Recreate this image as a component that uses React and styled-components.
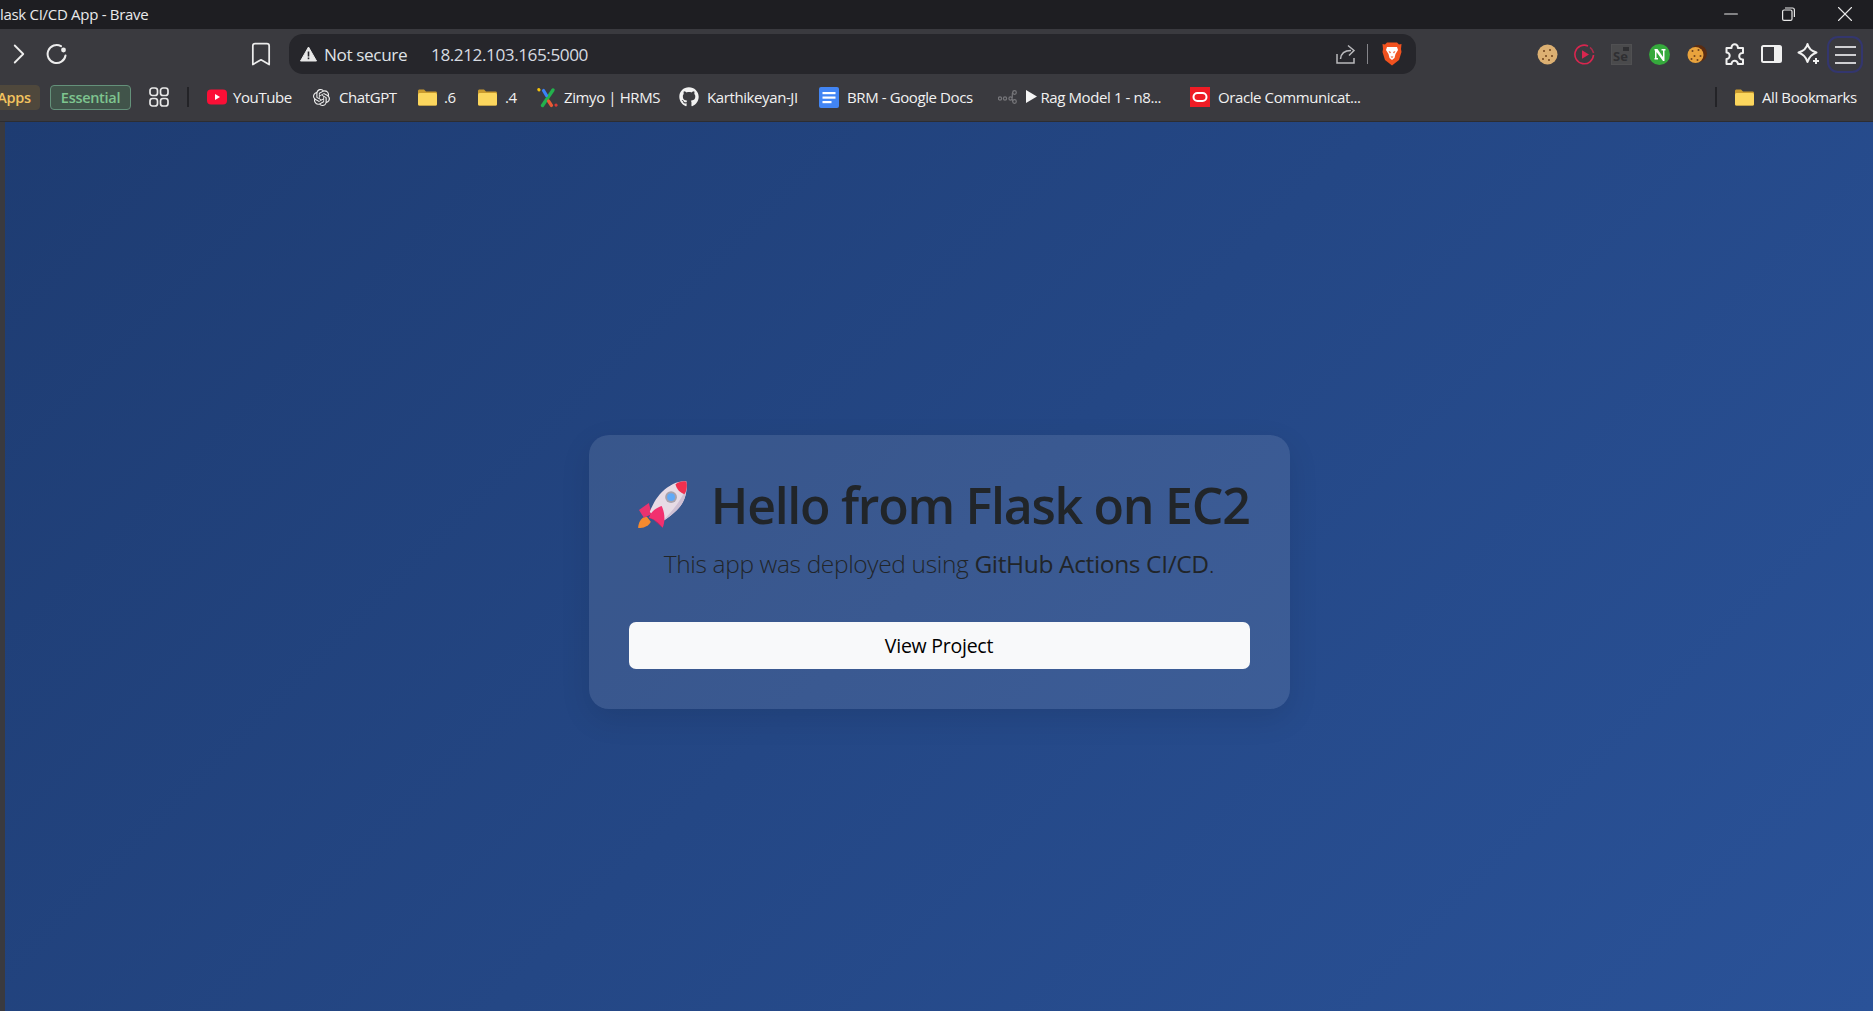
import React from "react";
import styled, { createGlobalStyle } from "styled-components";
import { FaGithub } from "react-icons/fa";
import { SiOpenai } from "react-icons/si";
import { ChevronRight, Bookmark as BookmarkIcon, Minus, X } from "lucide-react";

const Global = createGlobalStyle`
  html, body { margin: 0; padding: 0; height: 100%; overflow: hidden; background: #3a3a3f; }
  * { box-sizing: border-box; }
  #root { height: 100%; }
`;

const UI_FONT = `"Open Sans", "Noto Sans", "Liberation Sans", sans-serif`;

const Page = styled.div`
  display: flex;
  flex-direction: column;
  height: 100vh;
  font-family: ${UI_FONT};
`;

const TitleBar = styled.header`
  flex: 0 0 29px;
  display: flex;
  align-items: center;
  background: #1e1e22;
  color: #e9e9ea;
  font-size: 15px;
  letter-spacing: -0.3px;
  padding-bottom: 2px;
`;
const WindowTitle = styled.span`
  flex: 1;
  white-space: nowrap;
`;
const WindowButtons = styled.div`
  display: flex;
  align-items: center;
  gap: 43px;
  padding-right: 21px;
  color: #e8e8e8;
`;
const WindowButton = styled.span`
  display: flex;
  flex: 0 0 14px;
  min-width: 0;
  height: 14px;
  align-items: center;
  justify-content: center;
  & > svg { flex: none; }
`;

const Toolbar = styled.div`
  flex: 0 0 45px;
  display: flex;
  align-items: flex-start;
  padding-top: 5px;
  background: #3a3a3f;
`;
const NavButton = styled.span`
  display: flex;
  align-items: center;
  justify-content: center;
  height: 40px;
  min-width: 0;
  flex: 0 0 ${(p) => p.$w}px;
  margin-left: ${(p) => p.$ml || 0}px;
  color: #ececec;
  & > svg { flex: none; }
`;
const UrlBar = styled.div`
  flex: 0 0 1127px;
  height: 40px;
  margin-left: 20px;
  background: #26262b;
  border-radius: 14px;
  display: flex;
  align-items: center;
  padding: 0 14px 0 11px;
  color: #e6e6e6;
`;
const SecurityLabel = styled.span`
  font-size: 17.2px;
  letter-spacing: -0.4px;
  margin-left: 7px;
  width: 107px;
  white-space: nowrap;
  color: #dfe2e6;
`;
const UrlText = styled.span`
  font-size: 17.2px;
  letter-spacing: -0.45px;
  color: #d6dae0;
  flex: 1;
  white-space: nowrap;
`;
const UrlDivider = styled.span`
  width: 1px;
  height: 20px;
  background: #85858a;
  margin: 0 14px 0 11px;
`;
const ExtensionTray = styled.div`
  display: flex;
  align-items: center;
  height: 40px;
  margin-left: 121px;
`;
const ExtSlot = styled.span`
  display: flex;
  align-items: center;
  justify-content: center;
  flex: 0 0 ${(p) => p.$w || 21}px;
  min-width: 0;
  margin-right: ${(p) => p.$mr ?? 16}px;
  height: 24px;
  color: #f0f0f0;
  & > svg { flex: none; }
`;
const SeBadge = styled.span`
  position: relative;
  flex: none;
  width: 21px;
  height: 21px;
  background: #4a4a4c;
  border: 1px solid #505052;
  color: #2f2f32;
  font: 700 13px/1 ${UI_FONT};
  display: flex;
  align-items: flex-end;
  padding: 0 0 1px 1px;
  &::after {
    content: "";
    position: absolute;
    top: 2px;
    right: 2px;
    width: 6px;
    height: 4px;
    background: #2f2f32;
  }
`;
const MenuButton = styled.span`
  flex: 0 0 36px;
  height: 37px;
  margin-top: 1px;
  margin-left: -9px;
  border: 2px solid #33366e;
  border-radius: 11px;
  display: flex;
  flex-direction: column;
  align-items: center;
  justify-content: center;
  gap: 6px;
`;
const MenuLine = styled.span`
  width: 21px;
  height: 2px;
  background: #cfcfd2;
`;

const BookmarkBar = styled.nav`
  flex: 0 0 48px;
  display: flex;
  align-items: center;
  background: #3a3a3f;
  border-bottom: 1px solid #2d2d31;
  padding-bottom: 1px;
  color: #f1f1f1;
  font-size: 15px;
  letter-spacing: -0.4px;
  white-space: nowrap;
`;
const Chip = styled.span`
  flex: 0 0 ${(p) => p.$w}px;
  min-width: 0;
  margin-left: ${(p) => p.$ml}px;
  height: 25px;
  border-radius: 4px;
  display: flex;
  align-items: center;
  justify-content: center;
  font-weight: 600;
  font-size: 14.5px;
  letter-spacing: -0.3px;
  color: ${(p) => p.$fg};
  background: ${(p) => p.$bg};
  border: 1px solid ${(p) => p.$line};
`;
const BarDivider = styled.span`
  flex: 0 0 2px;
  height: 20px;
  margin-left: ${(p) => p.$ml}px;
  background: #232327;
`;
const Mark = styled.span`
  display: flex;
  align-items: center;
  flex: 0 0 ${(p) => p.$w}px;
  min-width: 0;
  margin-left: ${(p) => p.$ml}px;
  gap: ${(p) => p.$gap}px;
`;
const MarkIcon = styled.span`
  display: flex;
  align-items: center;
  justify-content: center;
  flex: 0 0 auto;
`;

const Main = styled.main`
  flex: 1;
  display: flex;
  align-items: center;
  justify-content: center;
  padding-top: 10px;
  border-left: 5px solid #3a3a3f;
  background: linear-gradient(135deg, #1e3c72, #2a5298);
`;
const Card = styled.section`
  width: 701px;
  height: 274px;
  padding: 40px;
  border-radius: 20px;
  background: rgba(255, 255, 255, 0.1);
  box-shadow: 0 10px 30px rgba(0, 0, 0, 0.1);
  color: #212529;
  text-align: center;
`;
const Heading = styled.h1`
  margin: 0 0 10px;
  display: flex;
  align-items: center;
  justify-content: center;
  gap: 23px;
  height: 60px;
  font-size: 50px;
  line-height: 66px;
  font-weight: 600;
  letter-spacing: -1.26px;
  white-space: nowrap;
  padding-left: 8px;
`;
const Lead = styled.p`
  margin: 0 0 40px;
  height: 37px;
  font-size: 24.5px;
  line-height: 38px;
  font-weight: 300;
  letter-spacing: -0.36px;
  white-space: nowrap;
`;
const Strong = styled.strong`
  font-weight: 400;
`;
const ProjectButton = styled.a`
  display: block;
  height: 47px;
  border-radius: 7px;
  background: #f8f9fa;
  color: #000;
  font-size: 19.5px;
  line-height: 48px;
  letter-spacing: -0.25px;
`;

const Rocket = () => (
  <svg width="52" height="49" viewBox="7 7 52 49">
    <path d="M17 44C13 44 9 47 8 55C14 56 19 53 21 49Z" fill="#f58a2e" />
    <path d="M19 30L9 37L14 45L22 41Z" fill="#e8336f" />
    <path d="M57 8C50 7 40 11 32 19C25 26 21 36 20 39L31 50C35 47 45 41 51 33C57 25 58 15 57 8Z" fill="#e7dbe5" />
    <path d="M31 50C35 47 45 41 51 33C55 28 57 21 57 14C53 25 43 39 31 50Z" fill="#cfc0d4" />
    <path d="M46 11C50 8 55 7.5 57 8.5C58 12 57.5 18 55 21C51 20 47 16 46 11Z" fill="#f0304f" />
    <circle cx="41.5" cy="24" r="6" fill="#a7a2ad" />
    <circle cx="41.5" cy="24" r="4" fill="#62aaf7" />
    <path d="M32 33C26 35 21 39 19 45L24 47L33 55C36 48 35 39 32 33Z" fill="#f2306f" />
    <path d="M19 45L24 47L33 55C29 50 24 46 19 45Z" fill="#b51f5c" />
  </svg>
);

const Reload = () => (
  <svg width="22" height="22" viewBox="0 0 22 22" fill="none" stroke="currentColor" strokeWidth="2">
    <path d="M19.5 12.5A9 9 0 1 1 15 3.2" strokeLinecap="round" />
    <circle cx="17.5" cy="7" r="2.4" fill="currentColor" stroke="none" />
  </svg>
);
const Warning = () => (
  <svg width="17" height="16" viewBox="0 0 17 16">
    <path d="M8.5 1L16.5 15H.5Z" fill="#e8e8e8" stroke="#e8e8e8" strokeLinejoin="round" />
    <rect x="7.7" y="5.5" width="1.6" height="5" fill="#26262b" />
    <rect x="7.7" y="11.5" width="1.6" height="1.7" fill="#26262b" />
  </svg>
);
const Share = () => (
  <svg width="20" height="20" viewBox="0 0 20 20" fill="none" stroke="#b9b9bc" strokeWidth="1.5">
    <path d="M1 10V19H18V14" />
    <path d="M4.5 15C5 9 9 6.5 15 6.5" />
    <path d="M12 1.5L18 6.5L13 11.5" />
  </svg>
);
const BraveLion = () => (
  <svg width="20" height="24" viewBox="0 0 20 24">
    <path d="M5 0.5H15L17 2.5L19.5 2L19 7L19.5 10L17 18L10 23.5L3 18L.5 10L1 7L.5 2L3 2.5Z" fill="#f1521f" />
    <path d="M5 5H15L16 8L13.5 12L12.5 16L10 18L7.5 16L6.5 12L4 8Z" fill="#fff" />
    <path d="M6.5 9L9 10L8 11.5ZM13.5 9L11 10L12 11.5Z" fill="#f1521f" />
    <path d="M8.5 14.5H11.5L10 16Z" fill="#f1521f" />
  </svg>
);
const Cookie = ({ size = 21, base = "#dcb072", dark }) => (
  <svg width={size} height={size} viewBox="0 0 21 21">
    {dark && <circle cx="12.5" cy="9.5" r="8.5" fill="#5a2c12" />}
    <circle cx={dark ? 9.5 : 10.5} cy={dark ? 11 : 10.5} r={dark ? 8 : 10} fill={base} />
    {[[7, 7], [13, 6], [15, 12], [9, 12], [6, 15], [12, 16]].map(([x, y]) => (
      <circle key={`${x}-${y}`} cx={dark ? x - 0.5 : x} cy={y} r="1" fill="#6f431d" />
    ))}
  </svg>
);
const PlayRing = () => (
  <svg width="21" height="21" viewBox="0 0 21 21" fill="none">
    <path d="M14 2A9.3 9.3 0 1 0 19.5 11" stroke="#d8264f" strokeWidth="1.6" />
    <path d="M19.6 9A9.3 9.3 0 0 0 16 3.3" stroke="#d8264f" strokeWidth="1.6" opacity=".7" />
    <path d="M8 6.2L15 10.5L8 14.8Z" fill="#d8264f" />
  </svg>
);
const NBadge = () => (
  <svg width="21" height="21" viewBox="0 0 21 21">
    <circle cx="10.5" cy="10.5" r="10.5" fill="#35a93c" />
    <path d="M5.5 5H8.5L14 13V6.5H12.5V5H16.5V6.5H15.5V17H14L7.5 8V14H9V15.5H5.5V14H6V6.5H5.5Z" fill="#fff" />
  </svg>
);
const ExtensionPuzzle = () => (
  <svg width="24" height="24" viewBox="0 0 24 24" fill="none" stroke="#f0f0f0" strokeWidth="2" strokeLinejoin="round">
    <path d="M8.5 5.5a3.2 3.2 0 0 1 6.4 0V6H20v5h-.6a3.2 3.2 0 0 0 0 6.4h.6V22h-5.1a3.2 3.2 0 0 0-6.4 0H3.5v-5a3.2 3.2 0 0 0 0-6.4V6h5Z" />
  </svg>
);
const SidePanel = () => (
  <svg width="21" height="18" viewBox="0 0 21 18">
    <rect x="1" y="1" width="19" height="16" rx="1.5" fill="none" stroke="#f0f0f0" strokeWidth="2" />
    <rect x="13" y="1" width="7" height="16" fill="#f0f0f0" />
  </svg>
);
const Sparkle = () => (
  <svg width="24" height="24" viewBox="0 0 24 24" fill="none" stroke="#f0f0f0" strokeWidth="2" strokeLinejoin="round">
    <path d="M10.5 2Q12 8.5 19.5 10.5Q12.5 13 10.5 20Q8.5 13 1.5 10.5Q9 8.5 10.5 2Z" />
    <path d="M19 16V22M16 19H22" strokeWidth="2" />
  </svg>
);
const RestoreIcon = () => (
  <svg width="13" height="14" viewBox="0 0 13 14" fill="none" stroke="#e8e8e8" strokeWidth="1.2">
    <rect x="0.6" y="3" width="9.4" height="10.4" rx="1.5" />
    <path d="M3 1H10.5C11.5 1 12.4 1.8 12.4 3V10" />
  </svg>
);
const AppsGrid = () => (
  <svg width="20" height="20" viewBox="0 0 20 20" fill="none" stroke="#e8e8e8" strokeWidth="1.7">
    <rect x="1" y="1" width="7.5" height="7.5" rx="2.5" />
    <rect x="11.5" y="1" width="7.5" height="7.5" rx="2.5" />
    <rect x="1" y="11.5" width="7.5" height="7.5" rx="2.5" />
    <rect x="11.5" y="11.5" width="7.5" height="7.5" rx="2.5" />
  </svg>
);
const YouTube = () => (
  <svg width="20" height="16" viewBox="0 0 20 16">
    <rect width="20" height="15" y="0.5" rx="4" fill="#fb0f36" />
    <path d="M8 5L13 8L8 11Z" fill="#fff" />
  </svg>
);
const Folder = () => (
  <svg width="19" height="17" viewBox="0 0 19 17">
    <path d="M0 2C0 1 .8.5 1.5.5H6L8 2.5H17.5C18.4 2.5 19 3 19 4V15C19 16 18.4 16.5 17.5 16.5H1.5C.6 16.5 0 16 0 15Z" fill="#c99a2e" />
    <rect y="4" width="19" height="12.5" rx="1.5" fill="#fbd65e" />
  </svg>
);
const Zimyo = () => (
  <svg width="21" height="21" viewBox="0 0 21 21" fill="none" strokeLinecap="round">
    <path d="M16 3L5.5 18.5" stroke="#23b14d" strokeWidth="3.4" />
    <path d="M1.8 2.6L2 2.9" stroke="#f4c20d" strokeWidth="3" />
    <path d="M6.5 3.5L9.5 8.5" stroke="#3b82f6" strokeWidth="3.2" />
    <path d="M11.5 14L14.5 18.5" stroke="#ea5a35" strokeWidth="3.2" />
    <path d="M19 18L19.1 18.2" stroke="#d93a36" strokeWidth="3" />
  </svg>
);
const Docs = () => (
  <svg width="20" height="21" viewBox="0 0 20 21">
    <rect width="20" height="21" rx="2" fill="#4285f4" />
    <rect x="3.5" y="5" width="13" height="2.2" fill="#fff" />
    <rect x="3.5" y="9.5" width="13" height="2.2" fill="#fff" />
    <rect x="3.5" y="14" width="9" height="2.2" fill="#fff" />
  </svg>
);
const N8n = () => (
  <svg width="19" height="14" viewBox="0 0 19 14" fill="none" stroke="#77777b" strokeWidth="1.2">
    <circle cx="2" cy="8.5" r="1.6" />
    <circle cx="7" cy="8.5" r="1.6" />
    <circle cx="12.5" cy="8.5" r="1.6" />
    <circle cx="16.5" cy="2.5" r="1.8" />
    <circle cx="16.5" cy="11.5" r="1.8" />
    <path d="M14 8C15 6 13.5 3.5 14.8 2.5M14 9C15 10.5 14.5 11.5 14.8 11.5" />
  </svg>
);
const Play = () => (
  <svg width="11" height="13" viewBox="0 0 11 13">
    <path d="M0 0L11 6.5L0 13Z" fill="#f5f5f5" />
  </svg>
);
const Oracle = () => (
  <svg width="20" height="20" viewBox="0 0 20 20">
    <rect width="20" height="20" fill="#ee1c25" />
    <rect x="3.5" y="6" width="13" height="8" rx="4" fill="none" stroke="#fff" strokeWidth="2" />
  </svg>
);

const bookmarks = [
  { ml: 18, w: 84, gap: 6, icon: <YouTube />, label: "YouTube" },
  { ml: 22, w: 83, gap: 9, icon: <SiOpenai size={17} />, label: "ChatGPT" },
  { ml: 22, w: 37, gap: 7, icon: <Folder />, label: ".6" },
  { ml: 23, w: 37, gap: 8, icon: <Folder />, label: ".4" },
  { ml: 22, w: 121, gap: 6, icon: <Zimyo />, label: "Zimyo | HRMS" },
  { ml: 21, w: 121, gap: 8, icon: <FaGithub size={20} />, label: "Karthikeyan-JI" },
  { ml: 19, w: 158, gap: 8, icon: <Docs />, label: "BRM - Google Docs" },
  { ml: 21, w: 170, gap: 9, icon: <N8n />, label: <><Play />&nbsp;Rag Model 1 - n8...</> },
  { ml: 22, w: 169, gap: 8, icon: <Oracle />, label: "Oracle Communicat..." },
];

export default function App() {
  return (
    <Page>
      <Global />
      <TitleBar>
        <WindowTitle>lask CI/CD App - Brave</WindowTitle>
        <WindowButtons>
          <WindowButton><Minus size={22} strokeWidth={1.1} /></WindowButton>
          <WindowButton><RestoreIcon /></WindowButton>
          <WindowButton><X size={26} strokeWidth={1} /></WindowButton>
        </WindowButtons>
      </TitleBar>
      <Toolbar>
        <NavButton $w={20} $ml={9}><ChevronRight size={34} strokeWidth={1.3} /></NavButton>
        <NavButton $w={22} $ml={17}><Reload /></NavButton>
        <NavButton $w={16} $ml={185}><BookmarkIcon size={28} strokeWidth={1.5} /></NavButton>
        <UrlBar>
          <Warning />
          <SecurityLabel>Not secure</SecurityLabel>
          <UrlText>18.212.103.165:5000</UrlText>
          <Share />
          <UrlDivider />
          <BraveLion />
        </UrlBar>
        <ExtensionTray>
          <ExtSlot><Cookie /></ExtSlot>
          <ExtSlot><PlayRing /></ExtSlot>
          <ExtSlot $mr={17}><SeBadge>Se</SeBadge></ExtSlot>
          <ExtSlot><NBadge /></ExtSlot>
          <ExtSlot $mr={17}><Cookie base="#e9a33d" dark /></ExtSlot>
          <ExtSlot $mr={16}><ExtensionPuzzle /></ExtSlot>
          <ExtSlot $mr={15}><SidePanel /></ExtSlot>
          <ExtSlot $w={24} $mr={15}><Sparkle /></ExtSlot>
          <MenuButton><MenuLine /><MenuLine /><MenuLine /></MenuButton>
        </ExtensionTray>
      </Toolbar>
      <BookmarkBar>
        <Chip $ml={-12} $w={52} $fg="#f3c35f" $bg="#4f483c" $line="#4f483c">Apps</Chip>
        <Chip $ml={10} $w={81} $fg="#7ec48f" $bg="#41544a" $line="#64917a">Essential</Chip>
        <Mark $ml={18} $w={20} $gap={0}><MarkIcon><AppsGrid /></MarkIcon></Mark>
        <BarDivider $ml={18} />
        {bookmarks.map((b, i) => (
          <Mark key={i} $ml={b.ml} $w={b.w} $gap={b.gap}>
            <MarkIcon>{b.icon}</MarkIcon>
            <span>{b.label}</span>
          </Mark>
        ))}
        <BarDivider $ml={356} />
        <Mark $ml={18} $w={122} $gap={8}>
          <MarkIcon><Folder /></MarkIcon>
          <span>All Bookmarks</span>
        </Mark>
      </BookmarkBar>
      <Main>
        <Card>
          <Heading><Rocket />Hello from Flask on EC2</Heading>
          <Lead>This app was deployed using <Strong>GitHub Actions CI/CD</Strong>.</Lead>
          <ProjectButton>View Project</ProjectButton>
        </Card>
      </Main>
    </Page>
  );
}
